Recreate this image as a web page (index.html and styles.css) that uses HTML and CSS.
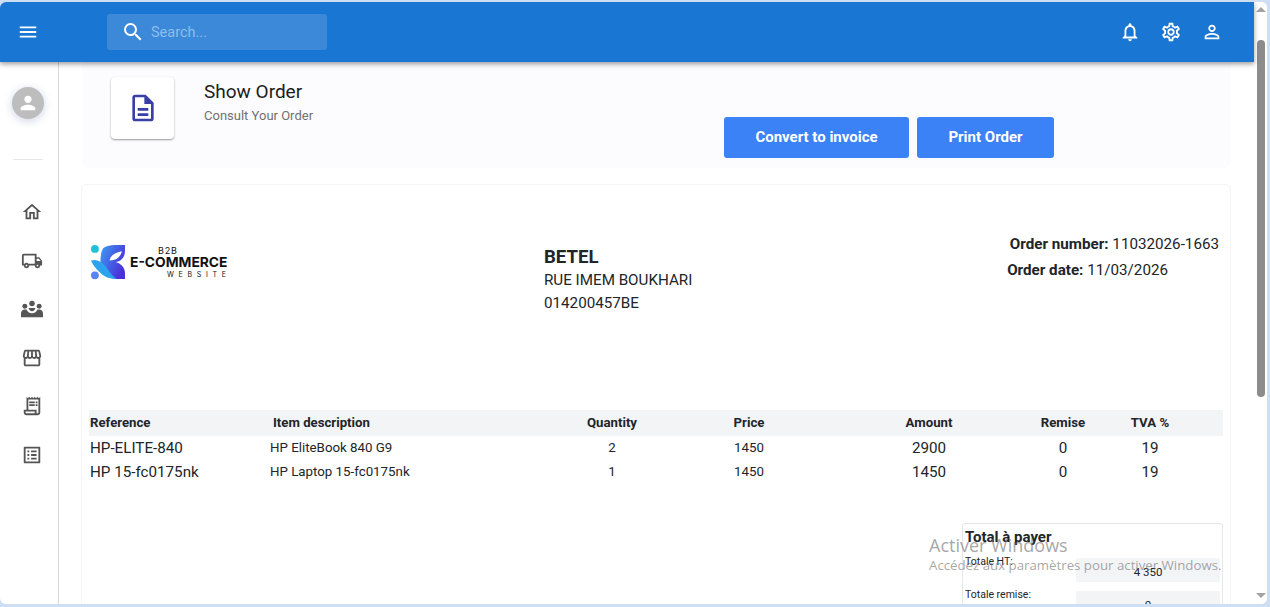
FILE: index.html
```html
<!DOCTYPE html>
<html>

<head>
	<title>Show Order</title>
	<link rel="icon" href="data:,">
	<meta name="viewport" content="width=device-width, initial-scale=1">
	<link rel="stylesheet" href="styles.css">
</head>

<body>
	<div class="window">
		<div class="app">
			<header class="topbar">
				<svg class="icon menu-icon" viewBox="0 0 24 24"><path d="M3 18h18v-2H3v2zm0-5h18v-2H3v2zm0-7v2h18V6H3z"/></svg>
				<div class="search">
					<svg class="icon" viewBox="0 0 24 24"><path d="M15.5 14h-.79l-.28-.27A6.471 6.471 0 0 0 16 9.5 6.5 6.5 0 1 0 9.5 16c1.61 0 3.09-.59 4.23-1.57l.27.28v.79l5 4.99L20.49 19l-4.99-5zm-6 0C7.01 14 5 11.99 5 9.5S7.01 5 9.5 5 14 7.01 14 9.5 11.99 14 9.5 14z"/></svg>
					<span>Search...</span>
				</div>
				<div class="topbar-actions">
					<svg class="icon" viewBox="0 0 24 24"><path d="M12 22c1.1 0 2-.9 2-2h-4c0 1.1.9 2 2 2zm6-6v-5c0-3.07-1.63-5.64-4.5-6.32V4c0-.83-.67-1.5-1.5-1.5s-1.5.67-1.5 1.5v.68C7.64 5.36 6 7.92 6 11v5l-2 2v1h16v-1l-2-2zm-2 1H8v-6c0-2.48 1.51-4.5 4-4.5s4 2.02 4 4.5v6z"/></svg>
					<svg class="icon" viewBox="0 0 24 24"><path d="M19.43 12.98c.04-.32.07-.64.07-.98 0-.34-.03-.66-.07-.98l2.11-1.65c.19-.15.24-.42.12-.64l-2-3.46c-.09-.16-.26-.25-.44-.25-.06 0-.12.01-.17.03l-2.49 1c-.52-.4-1.08-.73-1.69-.98l-.38-2.65C14.46 2.18 14.25 2 14 2h-4c-.25 0-.46.18-.49.42l-.38 2.65c-.61.25-1.17.59-1.69.98l-2.49-1c-.06-.02-.12-.03-.18-.03-.17 0-.34.09-.43.25l-2 3.46c-.13.22-.07.49.12.64l2.11 1.65c-.04.32-.07.65-.07.98 0 .33.03.66.07.98l-2.11 1.65c-.19.15-.24.42-.12.64l2 3.46c.09.16.26.25.44.25.06 0 .12-.01.17-.03l2.49-1c.52.4 1.08.73 1.69.98l.38 2.65c.03.24.24.42.49.42h4c.25 0 .46-.18.49-.42l.38-2.65c.61-.25 1.17-.59 1.69-.98l2.49 1c.06.02.12.03.18.03.17 0 .34-.09.43-.25l2-3.46c.12-.22.07-.49-.12-.64l-2.11-1.65zm-1.98-1.71c.04.31.05.52.05.73 0 .21-.02.43-.05.73l-.14 1.13.89.7 1.08.84-.7 1.21-1.27-.51-1.04-.42-.9.68c-.43.32-.84.56-1.25.73l-1.06.43-.16 1.13-.2 1.35h-1.4l-.19-1.35-.16-1.13-1.06-.43c-.43-.18-.83-.41-1.23-.71l-.91-.7-1.06.43-1.27.51-.7-1.21 1.08-.84.89-.7-.14-1.13c-.03-.31-.05-.54-.05-.74s.02-.43.05-.73l.14-1.13-.89-.7-1.08-.84.7-1.21 1.27.51 1.04.42.9-.68c.43-.32.84-.56 1.25-.73l1.06-.43.16-1.13.2-1.35h1.39l.19 1.35.16 1.13 1.06.43c.43.18.83.41 1.23.71l.91.7 1.06-.43 1.27-.51.7 1.21-1.07.85-.89.7.14 1.13zM12 8c-2.21 0-4 1.79-4 4s1.79 4 4 4 4-1.79 4-4-1.79-4-4-4zm0 6c-1.1 0-2-.9-2-2s.9-2 2-2 2 .9 2 2-.9 2-2 2z"/></svg>
					<svg class="icon" viewBox="0 0 24 24"><path d="M12 5.9a2.1 2.1 0 1 1 0 4.2 2.1 2.1 0 0 1 0-4.2m0 9c2.97 0 6.1 1.46 6.1 2.1v1.1H5.9V17c0-.64 3.13-2.1 6.1-2.1M12 4C9.79 4 8 5.79 8 8s1.79 4 4 4 4-1.79 4-4-1.79-4-4-4zm0 9c-2.67 0-8 1.34-8 4v3h16v-3c0-2.66-5.33-4-8-4z"/></svg>
				</div>
			</header>

			<div class="layout">
				<nav class="sidebar">
					<div class="avatar">
						<svg class="icon" viewBox="0 0 24 24"><path d="M12 12c2.21 0 4-1.79 4-4s-1.79-4-4-4-4 1.79-4 4 1.79 4 4 4zm0 2c-2.67 0-8 1.34-8 4v2h16v-2c0-2.66-5.33-4-8-4z"/></svg>
					</div>
					<div class="sidebar-line"></div>
					<div class="sidebar-links">
						<svg class="icon" viewBox="0 0 24 24"><path d="M12 5.69l5 4.5V18h-2v-6H9v6H7v-7.81l5-4.5M12 3L2 12h3v8h6v-6h2v6h6v-8h3L12 3z"/></svg>
						<svg class="icon" viewBox="0 0 24 24"><path d="M20 8h-3V4H3c-1.1 0-2 .9-2 2v11h2c0 1.66 1.34 3 3 3s3-1.34 3-3h6c0 1.66 1.34 3 3 3s3-1.34 3-3h2v-5l-3-4zm-.5 1.5l1.96 2.5H17V9.5h2.5zM6 18c-.55 0-1-.45-1-1s.45-1 1-1 1 .45 1 1-.45 1-1 1zm2.22-3c-.55-.61-1.33-1-2.22-1s-1.67.39-2.22 1H3V6h12v9H8.22zM18 18c-.55 0-1-.45-1-1s.45-1 1-1 1 .45 1 1-.45 1-1 1z"/></svg>
						<svg class="icon" viewBox="0 0 24 24"><circle cx="12" cy="6" r="3"/><circle cx="4.2" cy="9" r="2.7"/><circle cx="19.8" cy="9" r="2.7"/><path d="M8.2 11h7.6c-.6 2-1.8 3.5-3.8 3.5s-3.2-1.5-3.8-3.5z"/><path d="M0 21v-4.5C0 14 2 12.5 4.2 12.5H6c1 2.5 3 4 6 4s5-1.5 6-4h1.8c2.2 0 4.2 1.5 4.2 4V21z"/></svg>
						<svg class="icon" viewBox="0 0 24 24"><path d="M21.9 8.89l-1.05-4.37c-.22-.9-1-1.52-1.91-1.52H5.05c-.9 0-1.69.63-1.9 1.52L2.1 8.89c-.24 1.02-.02 2.06.62 2.88.08.11.19.19.28.29V19c0 1.1.9 2 2 2h14c1.1 0 2-.9 2-2v-6.94c.09-.09.2-.18.28-.28.64-.82.87-1.87.62-2.89zm-2.99-3.9l1.05 4.37c.1.42.01.84-.25 1.17-.14.18-.44.47-.94.47-.61 0-1.14-.49-1.21-1.14L16.98 5l1.93-.01zM13 5h1.96l.54 4.52c.05.39-.07.78-.33 1.07-.22.26-.54.41-.95.41-.67 0-1.22-.59-1.22-1.31V5zM8.49 9.52L9.04 5H11v4.69c0 .72-.55 1.31-1.29 1.31-.34 0-.65-.15-.89-.41-.25-.29-.37-.68-.33-1.07zm-4.45-.16L5.05 5h1.97l-.58 4.86c-.08.65-.6 1.14-1.21 1.14-.49 0-.8-.29-.93-.47-.27-.32-.36-.75-.26-1.17zM5 19v-6.03c.08.01.15.03.23.03.87 0 1.66-.36 2.24-.95.6.6 1.4.95 2.31.95.87 0 1.65-.36 2.23-.93.59.57 1.39.93 2.29.93.84 0 1.64-.35 2.24-.95.58.59 1.37.95 2.24.95.08 0 .15-.02.23-.03V19H5z"/></svg>
						<svg class="icon" viewBox="0 0 24 24"><path d="M19.5 3.5L18 2l-1.5 1.5L15 2l-1.5 1.5L12 2l-1.5 1.5L9 2 7.5 3.5 6 2v14H3v3c0 1.66 1.34 3 3 3h12c1.66 0 3-1.34 3-3V2l-1.5 1.5zM15 20H6c-.55 0-1-.45-1-1v-1h10v2zm4-1c0 .55-.45 1-1 1s-1-.45-1-1v-3H8V5h11v14z"/><path d="M9 7h6v2H9zm7 0h2v2h-2zm-7 3h6v2H9zm7 0h2v2h-2z"/></svg>
						<svg class="icon" viewBox="0 0 24 24"><path d="M19 5v14H5V5h14m1.1-2H3.9c-.5 0-.9.4-.9.9v16.2c0 .4.4.9.9.9h16.2c.4 0 .9-.5.9-.9V3.9c0-.5-.5-.9-.9-.9zM11 7h6v2h-6V7zm0 4h6v2h-6v-2zm0 4h6v2h-6zM7 7h2v2H7zm0 4h2v2H7zm0 4h2v2H7z"/></svg>
					</div>
				</nav>

				<main class="content">
					<section class="page-head">
						<div class="page-icon">
							<svg class="icon" viewBox="0 0 24 24"><path d="M8 16h8v2H8zm0-4h8v2H8zm6-10H6c-1.1 0-2 .9-2 2v16c0 1.1.89 2 1.99 2H18c1.1 0 2-.9 2-2V8l-6-6zm4 18H6V4h7v5h5v11z"/></svg>
						</div>
						<div class="page-title">
							<h1>Show Order</h1>
							<p>Consult Your Order</p>
						</div>
						<div class="buttons">
							<a class="button convert">Convert to invoice</a>
							<a class="button print">Print Order</a>
						</div>
					</section>

					<section class="order">
						<div class="order-head">
							<div class="logo">
								<svg class="logo-mark" viewBox="0 0 34 34">
									<defs>
										<linearGradient id="wing" x1="0" y1="0" x2="1" y2="0.6">
											<stop offset="0" stop-color="#3d9df2"/>
											<stop offset="1" stop-color="#4a2fd8"/>
										</linearGradient>
									</defs>
									<circle cx="3.8" cy="3.8" r="3.8" fill="#22c0d6"/>
									<circle cx="3.8" cy="29.5" r="3.8" fill="#5b82f2"/>
									<path d="M12 3C15 1 19 0 23 0H33V6C33 12 29 16 24 16.5C29 18 33 22 33 27V33H25C18 33 14 28 11 23C8 19 9 7 12 3Z" fill="url(#wing)"/>
									<path d="M18 15C19 10 24 7 30 6C29 11 25 15 18 15Z" fill="#fff"/>
									<path d="M0 15C6 13 12 17 16 23C19 28 22 31 25 33C18 33 13 31 9 27C5 23 2 20 0 15Z" fill="#2ba3ee"/>
								</svg>
								<div class="logo-text">
									<span class="logo-b2b">B2B</span>
									<span class="logo-name">E-COMMERCE</span>
									<span class="logo-site">WEBSITE</span>
								</div>
							</div>
							<div class="customer">
								<strong>BETEL</strong>
								<span>RUE IMEM BOUKHARI</span>
								<span>014200457BE</span>
							</div>
							<div class="order-info">
								<div><b>Order number:</b> 11032026-1663</div>
								<div class="order-date"><b>Order date:</b> 11/03/2026</div>
							</div>
						</div>

						<table class="lines">
							<colgroup>
								<col class="col-ref">
								<col class="col-desc">
								<col class="col-qty">
								<col class="col-price">
								<col class="col-amount">
								<col class="col-remise">
								<col class="col-tva">
								<col>
							</colgroup>
							<thead>
								<tr>
									<th class="left">Reference</th>
									<th class="left desc-head">Item description</th>
									<th>Quantity</th>
									<th>Price</th>
									<th>Amount</th>
									<th>Remise</th>
									<th>TVA %</th>
									<th></th>
								</tr>
							</thead>
							<tbody>
								<tr>
									<td class="left big">HP-ELITE-840</td>
									<td class="left">HP EliteBook 840 G9</td>
									<td>2</td>
									<td>1450</td>
									<td class="big">2900</td>
									<td class="big">0</td>
									<td class="big">19</td>
									<td></td>
								</tr>
								<tr>
									<td class="left big">HP 15-fc0175nk</td>
									<td class="left">HP Laptop 15-fc0175nk</td>
									<td>1</td>
									<td>1450</td>
									<td class="big">1450</td>
									<td class="big">0</td>
									<td class="big">19</td>
									<td></td>
								</tr>
							</tbody>
						</table>

						<div class="totals">
							<h2>Total à payer</h2>
							<div class="total-row">
								<label>Totale HT:</label>
								<div class="total-value">4 350</div>
							</div>
							<div class="total-row">
								<label>Totale remise:</label>
								<div class="total-value">0</div>
							</div>
						</div>
					</section>
				</main>
			</div>
		</div>

		<div class="scrollbar">
			<span class="arrow up"></span>
			<div class="scroll-track">
				<div class="scroll-thumb"></div>
			</div>
			<span class="arrow down"></span>
		</div>

		<div class="watermark">
			<div class="watermark-title">Activer Windows</div>
			<div>Accédez aux paramètres pour activer Windows.</div>
		</div>
	</div>
</body>

</html>
```

FILE: styles.css
```css
html,
body {
	height: 100%;
	margin: 0;
	overflow: hidden;
	background-color: #cfdff3;
}

body {
	font-family: 'Roboto', 'Liberation Sans', sans-serif;
	color: #212529;
}

.window {
	position: relative;
	display: flex;
	width: 1267px;
	height: 602px;
	margin-top: 2px;
	background-color: #fff;
	border-radius: 6px;
	overflow: hidden;
}

.app {
	flex: 1;
	min-width: 0;
	display: flex;
	flex-direction: column;
}

.icon {
	display: block;
	width: 22px;
	height: 22px;
	fill: currentColor;
}

/* top bar */
.topbar {
	position: relative;
	z-index: 2;
	flex: none;
	display: flex;
	align-items: center;
	height: 60px;
	background-color: #1976d2;
	color: #fff;
	box-shadow: 0 2px 5px rgba(0, 0, 0, 0.4);
}

.menu-icon {
	margin-left: 17px;
}

.search {
	display: flex;
	align-items: center;
	gap: 6px;
	width: 206px;
	height: 36px;
	margin-left: 68px;
	padding-left: 14px;
	background-color: #3c89d9;
	border-radius: 3px;
	font-size: 14.5px;
	color: #8dbdee;
}

.search .icon {
	width: 24px;
	height: 24px;
	color: #fff;
}

.topbar-actions {
	display: flex;
	gap: 19px;
	margin-left: auto;
	margin-right: 31px;
}

/* sidebar */
.layout {
	flex: 1;
	min-height: 0;
	display: flex;
}

.sidebar {
	flex: none;
	width: 58px;
	border-right: 1px solid #d8d8d8;
}

.avatar {
	display: flex;
	align-items: center;
	justify-content: center;
	width: 32px;
	height: 32px;
	margin: 25px 0 0 12px;
	background-color: #bdbdbd;
	border-radius: 50%;
	color: #fff;
	box-shadow: 0 2px 8px rgba(120, 130, 180, 0.35);
}

.sidebar-line {
	width: 30px;
	height: 1px;
	margin: 40px 0 0 13px;
	background-color: #e6e6e6;
}

.sidebar-links {
	display: flex;
	flex-direction: column;
	gap: 26.6px;
	margin: 41px 0 0 21px;
	color: #555;
}

/* page head */
.content {
	flex: 1;
	min-width: 0;
	padding: 0 23px 0 22px;
}

.page-head {
	display: flex;
	height: 106px;
	margin-left: 1px;
	padding: 15px 0 0 29px;
	box-sizing: border-box;
	background-color: #fcfcff;
	border-radius: 0 0 8px 8px;
}

.page-icon {
	display: flex;
	align-items: center;
	justify-content: center;
	flex: none;
	width: 63px;
	height: 62px;
	background-color: #fff;
	border-radius: 4px;
	color: #3a3fa5;
	box-shadow: 0 1px 2px rgba(0, 0, 0, 0.4);
}

.page-icon .icon {
	width: 32px;
	height: 32px;
}

.page-title {
	flex: none;
	width: 520px;
	margin-left: 30px;
}

.page-title h1 {
	margin: 4px 0 0 0;
	font-size: 19px;
	font-weight: 400;
	line-height: 21px;
	color: #1c1c1c;
}

.page-title p {
	margin: 6px 0 0 0;
	font-size: 13px;
	line-height: 15px;
	color: #707070;
}

.buttons {
	display: flex;
	gap: 8px;
	margin-top: 40px;
}

.button {
	display: block;
	height: 41px;
	line-height: 40px;
	box-sizing: border-box;
	background-color: #3b82f6;
	border-radius: 3px;
	color: #fff;
	font-size: 15px;
	font-weight: 700;
	text-align: center;
}

.convert {
	width: 185px;
}

.print {
	width: 137px;
}

/* order card */
.order {
	height: 460px;
	margin-top: 16px;
	padding: 0 7px;
	box-sizing: border-box;
	background-color: #fff;
	border: 1px solid #f5f5f8;
	border-bottom: none;
	border-radius: 6px 6px 0 0;
}

.order-head {
	display: flex;
	height: 225px;
}

.logo {
	flex: none;
	display: flex;
	width: 453px;
	height: 35px;
	margin: 60px 0 0 2px;
	color: #111;
}

.logo-mark {
	flex: none;
	width: 35px;
	height: 35px;
}

.logo-text {
	display: flex;
	flex-direction: column;
	margin-left: 4px;
	font-family: 'Inter', 'Liberation Sans', sans-serif;
}

.logo-b2b {
	margin-left: 28px;
	font-size: 9px;
	line-height: 11px;
	letter-spacing: 0.8px;
}

.logo-name {
	font-size: 13.8px;
	font-weight: 700;
	line-height: 13px;
	white-space: nowrap;
}

.logo-site {
	margin-left: 37px;
	font-size: 7px;
	line-height: 11px;
	letter-spacing: 4.7px;
	white-space: nowrap;
}

.customer {
	flex: none;
	display: flex;
	flex-direction: column;
	width: 400px;
	margin-top: 61px;
	font-size: 15.2px;
	line-height: 23px;
}

.customer strong {
	font-size: 18.6px;
}

.order-info {
	flex: 1;
	margin-top: 46px;
	margin-right: 4px;
	font-size: 15.2px;
	line-height: 26px;
	text-align: right;
}

.order-date {
	padding-right: 51px;
}

/* order lines */
.lines {
	width: 1134px;
	table-layout: fixed;
	border-collapse: collapse;
}

.col-ref {
	width: 180px;
}

.col-desc {
	width: 291px;
}

.col-qty {
	width: 104px;
}

.col-price {
	width: 170px;
}

.col-amount {
	width: 190px;
}

.col-remise {
	width: 78px;
}

.col-tva {
	width: 96px;
}

.lines th,
.lines td {
	padding: 0;
	text-align: center;
	white-space: nowrap;
}

.lines th {
	height: 24px;
	padding-bottom: 2px;
	background-color: #f3f4f6;
	font-size: 13.2px;
	font-weight: 700;
}

.lines td {
	height: 22px;
	padding-bottom: 2px;
	font-size: 13.3px;
}

.lines .left {
	padding-left: 1px;
	text-align: left;
}

.lines .desc-head {
	padding-left: 4px;
}

.lines .big {
	padding-bottom: 0;
	font-size: 15.2px;
}

/* totals */
.totals {
	width: 261px;
	height: 110px;
	margin: 39px 0 0 873px;
	padding: 5px 2px 0 2px;
	box-sizing: border-box;
	border: 1px solid #e5e7eb;
	border-bottom: none;
	border-radius: 4px 4px 0 0;
}

.totals h2 {
	margin: 0;
	font-size: 15px;
	font-weight: 700;
	line-height: 17px;
}

.total-row {
	display: flex;
	height: 24px;
	margin-top: 9px;
	justify-content: space-between;
}

.totals h2 + .total-row {
	margin-top: 12px;
}

.total-row label {
	font-size: 10.5px;
	line-height: 12px;
	margin-top: -2px;
}

.total-value {
	width: 144px;
	background-color: #f3f4f6;
	border-radius: 2px;
	font-size: 11.5px;
	line-height: 28px;
	text-align: center;
}

/* scrollbar */
.scrollbar {
	flex: none;
	display: flex;
	flex-direction: column;
	align-items: center;
	width: 13px;
	background-color: #fff;
}

.arrow {
	flex: none;
	width: 0;
	height: 0;
	border-left: 5px solid transparent;
	border-right: 5px solid transparent;
}

.arrow.up {
	margin: 5px 0 0 0;
	border-bottom: 5px solid #a3a3a3;
}

.arrow.down {
	margin: 0 0 6px 0;
	border-top: 5px solid #a3a3a3;
}

.scroll-track {
	flex: 1;
}

.scroll-thumb {
	width: 8px;
	height: 357px;
	margin-top: 28px;
	background-color: #8c8c8c;
	border-radius: 4px;
}

/* activation notice */
.watermark {
	position: absolute;
	left: 929px;
	top: 532px;
	font-family: 'Open Sans', 'Liberation Sans', sans-serif;
	font-size: 13.25px;
	line-height: 19px;
	color: rgba(110, 110, 110, 0.62);
	white-space: nowrap;
}

.watermark-title {
	font-size: 18px;
	line-height: 22px;
}
```
